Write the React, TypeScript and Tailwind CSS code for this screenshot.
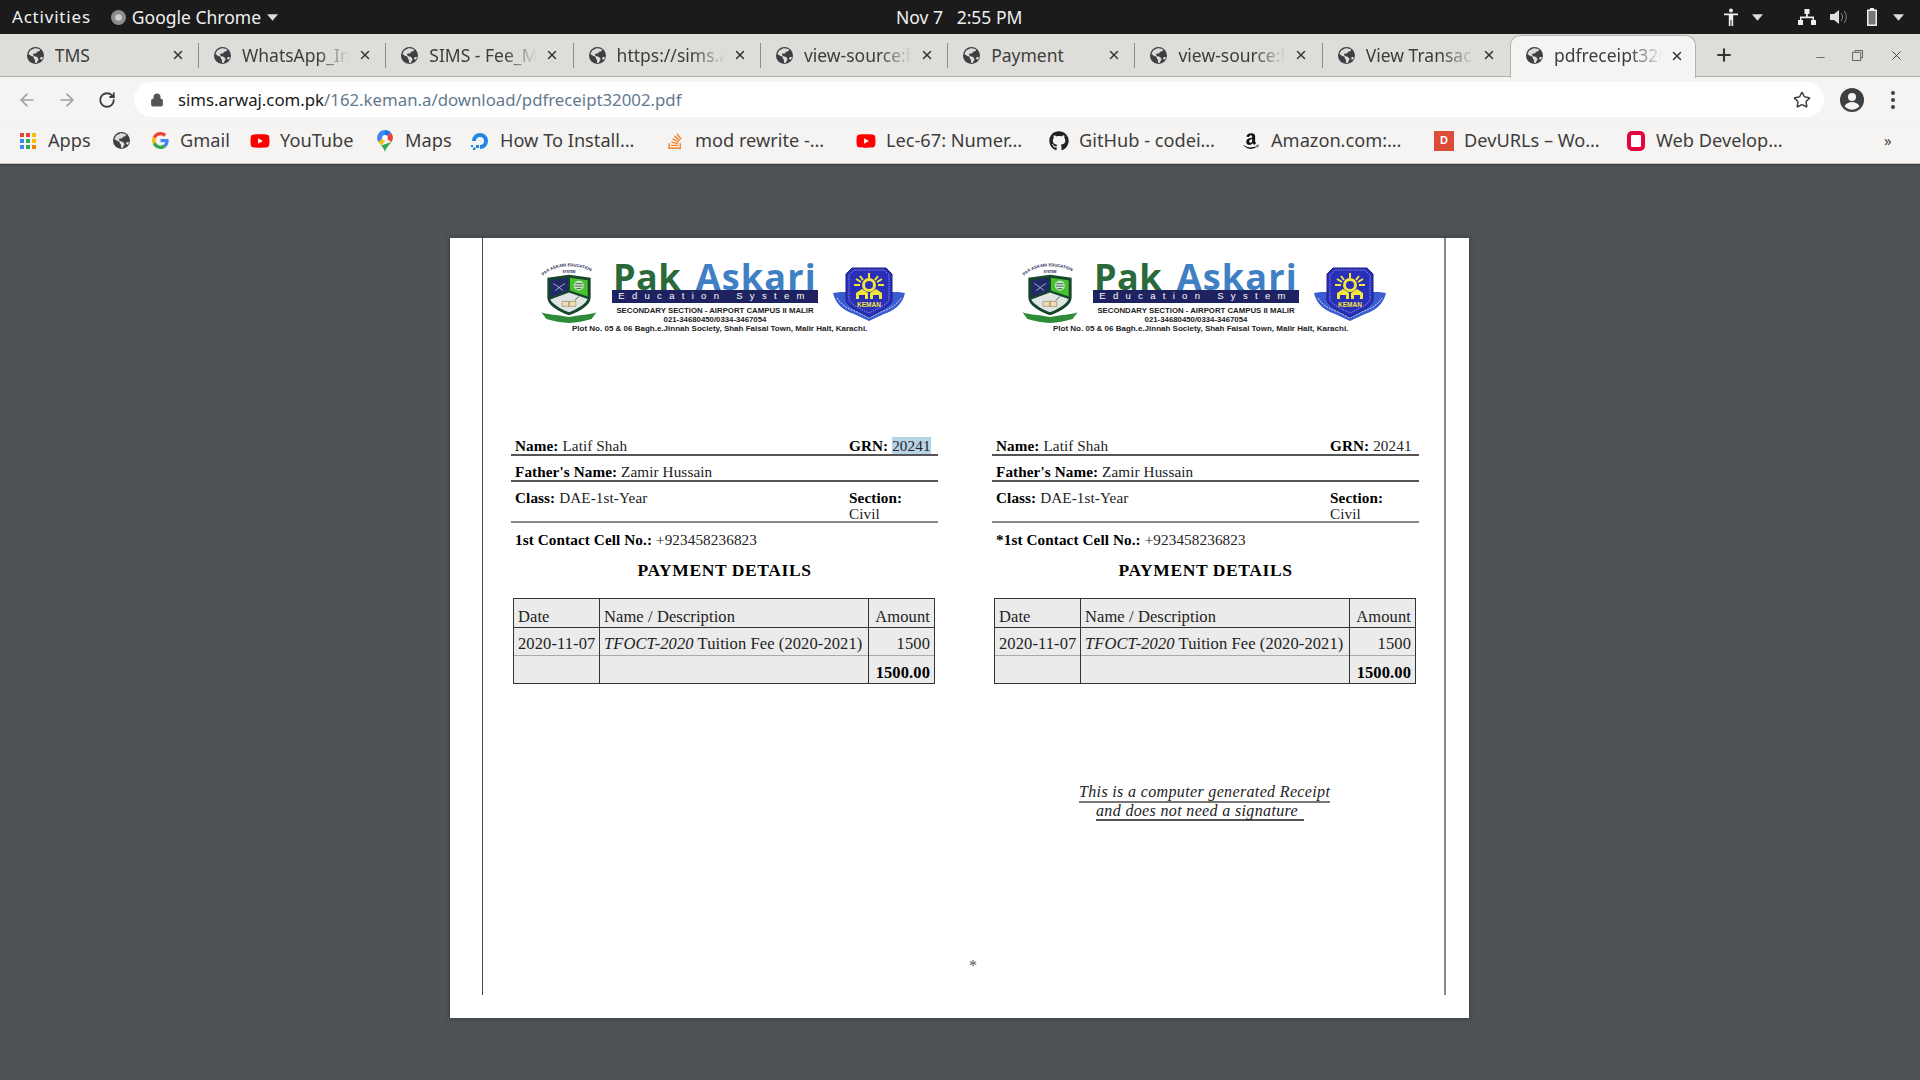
import { ArrowLeft, ArrowRight, RotateCw, Lock, Star, X, Plus, Minus } from "lucide-react";
import { FaGithub, FaStackOverflow, FaAmazon, FaYoutube } from "react-icons/fa";

const tabs = [
  { title: "TMS", fade: false },
  { title: "WhatsApp_Image", fade: true },
  { title: "SIMS - Fee_Management", fade: true },
  { title: "https://sims.arwaj", fade: true },
  { title: "view-source:https", fade: true },
  { title: "Payment", fade: false },
  { title: "view-source:https", fade: true },
  { title: "View Transactions", fade: true },
];

function Globe({ className }: { className?: string }) {
  return (
    <svg viewBox="0 0 16 16" className={className}>
      <circle cx="8" cy="8" r="8" fill="#3c4043" />
      <path
        d="M7 1.2 3 3.2 1.3 6.5 4 8.5l2 .5.5 2 1 1v2.8l1.5.2 2-3.5-1.500-2-3-1-1-1.500 1-1L8.500 6l1-1.500 2-.5 1-1.500C11.500 1.700 9 .8 7 1.200Z"
        fill="#dedcd8"
      />
      <path d="M13 9.500h2l-.8 2.500-2-.8Z" fill="#dedcd8" />
    </svg>
  );
}

function Tab({ title, fade, last }: { title: string; fade: boolean; last: boolean }) {
  return (
    <div className="flex h-[42px] w-[187.3px] shrink-0 items-center pl-[15px]">
      <Globe className="h-[17px] w-[17px] shrink-0" />
      <div
        className={
          fade
            ? "ml-[11px] w-[108px] shrink-0 overflow-hidden whitespace-nowrap text-[17.5px] text-[#3d3d3d] [mask-image:linear-gradient(to_right,black_70%,transparent)]"
            : "ml-[11px] w-[108px] shrink-0 overflow-hidden whitespace-nowrap text-[17.5px] text-[#3d3d3d]"
        }
      >
        {title}
      </div>
      <X size={14} strokeWidth={2.5} className="ml-[8px] shrink-0 text-[#333]" />
      {!last && <div className="ml-auto h-[25px] w-px shrink-0 bg-[#8f8d89]" />}
    </div>
  );
}

function AppsIcon() {
  const colors = ["#ea4335", "#ea4335", "#fbbc04", "#4285f4", "#34a853", "#fbbc04", "#4285f4", "#34a853", "#ea8600"];
  return (
    <div className="grid h-[16px] w-[16px] grid-cols-3 gap-[2px]">
      {colors.map((c, i) => (
        <svg key={i} viewBox="0 0 4 4" className="h-full w-full">
          <rect width="4" height="4" fill={c} />
        </svg>
      ))}
    </div>
  );
}

function GoogleIcon() {
  return (
    <svg viewBox="0 0 48 48" className="h-[17px] w-[17px]">
      <path fill="#EA4335" d="M24 9.500c3.540 0 6.710 1.220 9.210 3.600l6.850-6.850C35.900 2.380 30.470 0 24 0 14.620 0 6.510 5.380 2.560 13.220l7.980 6.190C12.430 13.720 17.740 9.500 24 9.500z" />
      <path fill="#4285F4" d="M46.980 24.550c0-1.570-.15-3.090-.38-4.550H24v9.020h12.940c-.58 2.960-2.260 5.480-4.780 7.180l7.730 6c4.510-4.180 7.090-10.360 7.090-17.650z" />
      <path fill="#FBBC05" d="M10.530 28.590c-.48-1.450-.76-2.990-.76-4.590s.27-3.140.76-4.590l-7.980-6.190C.92 16.460 0 20.120 0 24c0 3.880.92 7.540 2.560 10.780l7.970-6.190z" />
      <path fill="#34A853" d="M24 48c6.480 0 11.930-2.130 15.890-5.810l-7.730-6c-2.150 1.450-4.920 2.300-8.160 2.300-6.260 0-11.570-4.220-13.470-9.910l-7.980 6.190C6.510 42.620 14.620 48 24 48z" />
    </svg>
  );
}

function MapsIcon() {
  return (
    <svg viewBox="0 0 20 28" className="h-[22px] w-[16px]">
      <path d="M10 0C4.500 0 0 4.400 0 9.800c0 2.300.9 4.400 2 6l8-9.500Z" fill="#4285f4" />
      <path d="M10 0c3 0 5.700 1.300 7.500 3.400L10 10Z" fill="#1a73e8" />
      <path d="M17.500 3.400C19 5.100 20 7.300 20 9.800c0 2.200-.8 4-1.800 5.500L10 10Z" fill="#ea4335" />
      <path d="M2 15.800 10 7l3 3.500-8 9.300c-1-1.400-2-2.600-3-4Z" fill="#fbbc04" />
      <path d="M18.200 15.300C15.500 19.500 11.500 22 10 28c-1-4-3-6-5-8.200Z" fill="#34a853" />
      <circle cx="10" cy="10" r="3.500" fill="#fff" />
    </svg>
  );
}

function DigitalOceanIcon() {
  return (
    <svg viewBox="0 0 20 20" className="h-[20px] w-[20px]">
      <path d="M10 18v-4a4 4 0 1 0-4-4H2a8 8 0 1 1 8 8Z" fill="#1f88e5" />
      <path d="M6 14h3v3H6ZM3 16.500h2.500V19H3ZM1 14h2v2H1Z" fill="#1f88e5" />
    </svg>
  );
}

function Bookmark({ width, icon, label }: { width: string; icon: React.ReactNode; label?: string }) {
  return (
    <div className={`flex h-full shrink-0 items-center ${width}`}>
      <div className="flex w-[20px] shrink-0 items-center justify-center">{icon}</div>
      {label && <span className="ml-[10px] whitespace-nowrap text-[18.2px] text-[#3d3d3d]">{label}</span>}
    </div>
  );
}

function SchoolCrest({ id }: { id: string }) {
  return (
    <svg viewBox="0 0 56 62" className="h-[61px] w-[56px] shrink-0">
      <path id={id} d="M2 13C12 1 40 0 54 11" fill="none" />
      <text fontSize="4.200" fontWeight="700" fill="#22224f" fontFamily="Liberation Sans, sans-serif">
        <textPath href={`#${id}`}>PAK ASKARI EDUCATION</textPath>
      </text>
      <text x="28" y="10" textAnchor="middle" fontSize="3.200" fontWeight="700" fill="#22224f" fontFamily="Liberation Sans, sans-serif">
        SYSTEM
      </text>
      <path d="M6 15 28 12l22 3v20c0 8-11 14-22 18C17 49 6 43 6 35Z" fill="#16452c" />
      <path d="M9 17.500 27 15v13L9 35Z" fill="#1f2a66" />
      <path d="M29 15l18 2.500V34L29 28Z" fill="#47c22f" />
      <path d="M9 37l19-7 19 6.500c-2 5-10 10-19 13.500-9-3.500-17-8.500-19-13Z" fill="#dfe5e3" />
      <circle cx="38" cy="23" r="5" fill="#cfe5cf" />
      <path d="M34.500 21h7M34 23.500h8M35.500 26h5" stroke="#2d5a38" strokeWidth=".9" />
      <path d="M14 22l8 6M22 22l-8 6M14 22l-2-1M22 22l2-1" stroke="#e8e8e8" strokeWidth=".7" />
      <path d="M21 39h7v5h-7ZM28 39h7v5h-7Z" fill="#f3ddb4" stroke="#8a7a55" strokeWidth=".6" />
      <path d="M34 38l4-4" stroke="#444" strokeWidth=".9" />
      <path d="M0 50c8 3 14 2 28 5 14-3 20-2 28-5l-5 7c-8 2-15 4-23 4s-15-2-23-4Z" fill="#2e8b3a" />
    </svg>
  );
}

function KemanCrest() {
  return (
    <svg viewBox="0 0 72 56" className="h-[56px] w-[72px] shrink-0">
      <path d="M0 27c3 12 10 17 21 21l15 7 15-7c11-4 18-9 21-21l-7-1H7Z" fill="#3a5cd0" />
      <path d="M4 32c5 8 12 11 20 14l12 6 12-6c8-3 15-6 20-14" fill="none" stroke="#cdd6f5" strokeWidth="1" strokeDasharray="2 1" />
      <path d="M13 8l6-6h34l6 6v26c0 6-14 12-23 17-9-5-23-11-23-17Z" fill="#2a2fb8" stroke="#1b1f8a" strokeWidth="1" />
      <path d="M16 9l5-5h30l5 5v24c0 5-12 10-20 14-8-4-20-9-20-14Z" fill="none" stroke="#9aa3ea" strokeWidth=".8" strokeDasharray="1.500 1" />
      <path d="M36 7v5M27 10l3 4M45 10l-3 4M21 19h6M45 19h6M23 13l5 3M49 13l-5 3" stroke="#f3e53a" strokeWidth="2" />
      <circle cx="36" cy="19" r="7" fill="#f3e53a" />
      <circle cx="36" cy="19" r="4" fill="#2a2fb8" />
      <path d="M23 33v-6l6-4 6 4v6h-3v-4h-6v4ZM37 33v-6l6-4 6 4v6h-3v-4h-6v4Z" fill="#f3e53a" />
      <text x="36" y="40.500" textAnchor="middle" fontSize="6.500" fontWeight="700" fill="#f3e53a" fontFamily="Liberation Sans, sans-serif">
        KEMAN
      </text>
    </svg>
  );
}

function Letterhead({ id }: { id: string }) {
  return (
    <div className="flex h-[85px] w-full flex-col tracking-normal">
      <div className="ml-[30px] flex h-[61px] items-start">
        <SchoolCrest id={id} />
        <div className="ml-[15px] flex w-[206px] flex-col items-center">
          <div className="flex h-[27px] w-full justify-between whitespace-nowrap px-px font-['Open_Sans',sans-serif] text-[36px] font-bold leading-[27px]">
            <span className="text-[#2a6a3a] tracking-[.4px]">Pak</span>
            <span className="text-[#3f80c4] tracking-[1.2px]">Askari</span>
          </div>
          <div className="flex h-[13px] w-full items-center justify-center whitespace-pre bg-[#1f2260] font-['Liberation_Sans',sans-serif] text-[9.500px] tracking-[7.300px] text-white">
            Education System
          </div>
          <div className="mt-[3px] whitespace-nowrap font-['Liberation_Sans',sans-serif] text-[7.800px] font-bold leading-[9px] text-[#222]">
            SECONDARY SECTION - AIRPORT CAMPUS II MALIR
          </div>
          <div className="whitespace-nowrap font-['Liberation_Sans',sans-serif] text-[7.800px] font-bold leading-[9px] text-[#222]">
            021-34680450/0334-3467054
          </div>
        </div>
        <div className="ml-[15px] mt-[3px]">
          <KemanCrest />
        </div>
      </div>
      <div className="whitespace-nowrap pl-[61px] font-['Liberation_Sans',sans-serif] text-[8px] font-bold leading-[10px] text-[#222]">
        Plot No. 05 &amp; 06 Bagh.e.Jinnah Society, Shah Faisal Town, Malir Halt, Karachi.
      </div>
    </div>
  );
}

function Receipt({ selected, star, id }: { selected?: boolean; star?: boolean; id: string }) {
  return (
    <div className="flex w-[427px] shrink-0 flex-col font-['Liberation_Serif',serif] text-[15.2px] tracking-[.1px] text-[#222]">
      <Letterhead id={id} />
      <div className="mt-[84px] flex h-[24px] items-end border-b-2 border-[#555] pb-[1px] pl-[4px] leading-[14px]">
        <div className="w-[334px] shrink-0">
          <b className="text-black">Name:</b> Latif Shah
        </div>
        <div>
          <b className="text-black">GRN:</b>{" "}
          {selected ? <span className="bg-[#b7d3e6]">20241</span> : "20241"}
        </div>
      </div>
      <div className="flex h-[26px] items-end border-b-2 border-[#555] pb-[1px] pl-[4px] leading-[14px]">
        <div>
          <b className="text-black">Father's Name:</b> Zamir Hussain
        </div>
      </div>
      <div className="flex h-[41px] border-b-2 border-[#888] pl-[4px] pt-[8px] leading-[16px]">
        <div className="w-[334px] shrink-0">
          <b className="text-black">Class:</b> DAE-1st-Year
        </div>
        <div>
          <b className="text-black">Section:</b>
          <br />
          Civil
        </div>
      </div>
      <div className="pl-[4px] pt-[7px] leading-[20px]">
        <b className="text-black">{star ? "*" : ""}1st Contact Cell No.:</b> +923458236823
      </div>
      <div className="mt-[8.5px] text-center text-[17.5px] font-bold leading-[22px] tracking-[.6px] text-black">PAYMENT DETAILS</div>
      <table className="ml-[2px] mt-[17px] w-[421px] table-fixed border-collapse bg-[#ebebeb] text-[16.5px] leading-[18px]">
        <colgroup>
          <col className="w-[86px]" />
          <col className="w-[269px]" />
          <col className="w-[66px]" />
        </colgroup>
        <tbody>
          <tr className="h-[29px]">
            <td className="border border-[#333] px-[4px] pt-[8px]">Date</td>
            <td className="border border-[#333] px-[4px] pt-[8px]">Name / Description</td>
            <td className="border border-[#333] px-[4px] pt-[8px] text-right">Amount</td>
          </tr>
          <tr className="h-[28px]">
            <td className="whitespace-nowrap border-x border-[#333] px-[4px] pt-[6px]">2020-11-07</td>
            <td className="whitespace-nowrap border-x border-[#333] px-[4px] pt-[6px]">
              <i>TFOCT-2020</i> Tuition Fee (2020-2021)
            </td>
            <td className="border-x border-[#333] px-[4px] pt-[6px] text-right">1500</td>
          </tr>
          <tr className="h-[28px] border-t border-[#aaa]">
            <td className="border-x border-b border-[#333]" />
            <td className="border-x border-b border-[#333]" />
            <td className="border-x border-b border-[#333] px-[4px] pt-[8px] text-right font-bold text-black">1500.00</td>
          </tr>
        </tbody>
      </table>
    </div>
  );
}

export default function App() {
  return (
    <div className="flex h-[1080px] w-[1920px] flex-col overflow-hidden bg-[#4f5357] font-['Noto_Sans',sans-serif]">
      {/* gnome top bar */}
      <div className="flex h-[34px] shrink-0 items-center bg-[#1b1b1b] text-[17.5px] text-[#f0f0f0]">
        <span className="ml-[12px] text-[17px] tracking-[.8px]">Activities</span>
        <svg viewBox="0 0 16 16" className="ml-[20px] h-[15px] w-[15px] shrink-0">
          <circle cx="8" cy="8" r="8" fill="#8c8c8c" />
          <circle cx="8" cy="8" r="3.500" fill="#d0d0d0" />
        </svg>
        <span className="ml-[6px]">Google Chrome</span>
        <svg viewBox="0 0 10 6" className="ml-[6px] h-[7px] w-[11px] shrink-0">
          <path d="M0 0h10L5 6Z" fill="#ddd" />
        </svg>
        <span className="ml-[618px] whitespace-pre">Nov 7   2:55 PM</span>
        <div className="ml-auto flex items-center">
          <svg viewBox="0 0 14 18" className="h-[18px] w-[14px]">
            <circle cx="7" cy="2.500" r="2" fill="#eee" />
            <path d="M0 5.500h14v1.800H9.200V18H7.500v-6H6.500v6H4.800V7.300H0Z" fill="#eee" />
          </svg>
          <svg viewBox="0 0 10 6" className="ml-[14.5px] h-[7px] w-[11px]">
            <path d="M0 0h10L5 6Z" fill="#ddd" />
          </svg>
          <svg viewBox="0 0 18 16" className="ml-[34.5px] h-[16px] w-[18px]">
            <path d="M6.500 0h5v5h-1.700v2.500H16V11h2v5h-5v-5h1.500V9.200H3.500V11H5v5H0v-5h2V7.500h6V5H6.500Z" fill="#eee" />
          </svg>
          <svg viewBox="0 0 18 16" className="ml-[14px] h-[16px] w-[18px]">
            <path d="M0 5h4l5-4v14l-5-4H0Z" fill="#ddd" />
            <path d="M11 4c2 2 2 6 0 8M14 2c3 3 3 9 0 12" fill="none" stroke="#888" strokeWidth="1" />
          </svg>
          <svg viewBox="0 0 12 18" className="ml-[18px] h-[18px] w-[12px]">
            <path d="M4 0h4v1.500h3V18H1V1.500h3Z" fill="#eee" />
            <path d="M2.500 3h7v13.500h-7Z" fill="#777" />
          </svg>
          <svg viewBox="0 0 10 6" className="ml-[15.5px] mr-[16px] h-[7px] w-[11px]">
            <path d="M0 0h10L5 6Z" fill="#ddd" />
          </svg>
        </div>
      </div>

      {/* tab strip */}
      <div className="flex h-[43px] shrink-0 items-center border-b border-[#b3b1ad] bg-[#dfddd9] pl-[11.7px]">
        {tabs.map((t, i) => (
          <Tab key={i} title={t.title} fade={t.fade} last={i === tabs.length - 1} />
        ))}
        <div className="flex h-[43px] w-[186px] shrink-0 translate-y-[1px] items-center rounded-t-[10px] border border-b-0 border-[#b3b1ad] bg-[#f5f4f2] pb-[2px] pl-[15px]">
          <Globe className="h-[17px] w-[17px] shrink-0" />
          <div className="ml-[11px] w-[108px] shrink-0 overflow-hidden whitespace-nowrap text-[17.5px] text-[#3d3d3d] [mask-image:linear-gradient(to_right,black_70%,transparent)]">
            pdfreceipt32002.pdf
          </div>
          <X size={14} strokeWidth={2.5} className="ml-[8px] shrink-0 text-[#333]" />
        </div>
        <Plus size={20} strokeWidth={2.5} className="ml-[18px] shrink-0 text-[#333]" />
        <Minus size={13} strokeWidth={1.5} className="ml-[80px] mt-[4px] shrink-0 text-[#555]" />
        <svg viewBox="0 0 12 12" className="ml-[25px] h-[11px] w-[11px] shrink-0">
          <path d="M3.500 2.500V.5h8v8h-2M.5 2.500h9v9h-9Z" fill="none" stroke="#555" strokeWidth="1" />
        </svg>
        <X size={15} strokeWidth={1.6} className="ml-[26px] shrink-0 text-[#444]" />
      </div>

      {/* address bar */}
      <div className="flex h-[45px] shrink-0 items-center bg-[#f5f4f2]">
        <ArrowLeft size={20} strokeWidth={2} className="ml-[17px] shrink-0 text-[#a0a0a0]" />
        <ArrowRight size={20} strokeWidth={2} className="ml-[20px] shrink-0 text-[#a0a0a0]" />
        <RotateCw size={18} strokeWidth={2.4} className="ml-[21px] shrink-0 text-[#3d3d3d]" />
        <div className="ml-[18px] flex h-[35px] w-[1690px] shrink-0 items-center rounded-full bg-white pl-[16px] text-[16.8px]">
          <Lock size={14} fill="#555" strokeWidth={2} className="shrink-0 text-[#555]" />
          <span className="ml-[14px] text-[#1a1a1a]">sims.arwaj.com.pk</span>
          <span className="text-[#64798e]">/162.keman.a/download/pdfreceipt32002.pdf</span>
          <Star size={18} strokeWidth={2} className="ml-auto mr-[13px] shrink-0 text-[#3d3d3d]" />
        </div>
        <svg viewBox="0 0 24 24" className="ml-[16px] h-[24px] w-[24px] shrink-0">
          <circle cx="12" cy="12" r="12" fill="#3c4043" />
          <circle cx="12" cy="9" r="4" fill="#f5f4f2" />
          <path d="M4.500 18c2-3 5-4 7.500-4s5.500 1 7.500 4c-2 2.500-4.800 3.800-7.500 3.800S6.500 20.500 4.500 18Z" fill="#f5f4f2" />
        </svg>
        <div className="ml-[27px] flex flex-col gap-[3px]">
          <div className="h-[4px] w-[4px] rounded-full bg-[#3c4043]" />
          <div className="h-[4px] w-[4px] rounded-full bg-[#3c4043]" />
          <div className="h-[4px] w-[4px] rounded-full bg-[#3c4043]" />
        </div>
      </div>

      {/* bookmarks */}
      <div className="flex h-[42px] shrink-0 items-center border-b border-[#c8c6c2] bg-[#f5f4f2] pb-[4px] pl-[18px] shadow-[0_1px_2px_rgba(0,0,0,.3)]">
        <Bookmark width="w-[93px]" icon={<AppsIcon />} label="Apps" />
        <Bookmark width="w-[39px]" icon={<Globe className="h-[17px] w-[17px]" />} />
        <Bookmark width="w-[100px]" icon={<GoogleIcon />} label="Gmail" />
        <Bookmark width="w-[125px]" icon={<FaYoutube size={20} className="text-[#f00]" />} label="YouTube" />
        <Bookmark width="w-[95px]" icon={<MapsIcon />} label="Maps" />
        <Bookmark width="w-[195px]" icon={<DigitalOceanIcon />} label="How To Install…" />
        <Bookmark width="w-[191px]" icon={<FaStackOverflow size={18} className="text-[#f48024]" />} label="mod rewrite -…" />
        <Bookmark width="w-[193px]" icon={<FaYoutube size={20} className="text-[#f00]" />} label="Lec-67: Numer…" />
        <Bookmark width="w-[192px]" icon={<FaGithub size={20} className="text-[#222]" />} label="GitHub - codei…" />
        <Bookmark width="w-[193px]" icon={<FaAmazon size={18} className="text-[#111]" />} label="Amazon.com:…" />
        <Bookmark
          width="w-[192px]"
          icon={
            <div className="flex h-[20px] w-[20px] items-center justify-center bg-[#dd4b39] font-['Liberation_Sans',sans-serif] text-[11px] font-bold text-white">
              D
            </div>
          }
          label="DevURLs – Wo…"
        />
        <Bookmark
          width="w-[258px]"
          icon={<div className="h-[20px] w-[18px] rounded-[5px] border-[4px] border-[#e3063e] bg-white" />}
          label="Web Develop…"
        />
        <span className="text-[15px] text-[#444]">»</span>
      </div>

      {/* pdf viewer */}
      <div className="flex flex-1 justify-center pr-[1px] pt-[74px]">
        <div className="h-[780px] w-[1019px] bg-white px-[32px] shadow-[0_0_6px_rgba(0,0,0,.35)]">
          <div className="relative flex h-[757px] w-[964px] gap-[54px] border-l border-r-2 border-l-[#444] border-r-[#888] pl-[28px] pt-[25px]">
            <Receipt id="crest-a" selected />
            <div className="relative">
              <Receipt id="crest-b" star />
              <div className="absolute left-[87px] top-[521px] flex flex-col items-start whitespace-nowrap font-['Liberation_Serif',serif] text-[16px] italic leading-[16.5px] tracking-[.35px] text-[#222]">
                <div className="border-b-2 border-[#777]">This is a computer generated Receipt</div>
                <div className="ml-[17px] w-[208px] border-b-2 border-[#555]">and does not need a signature</div>
              </div>
            </div>
            <span className="absolute left-[486px] top-[716px] font-['Liberation_Serif',serif] text-[16px] text-[#555]">*</span>
          </div>
        </div>
      </div>
    </div>
  );
}
